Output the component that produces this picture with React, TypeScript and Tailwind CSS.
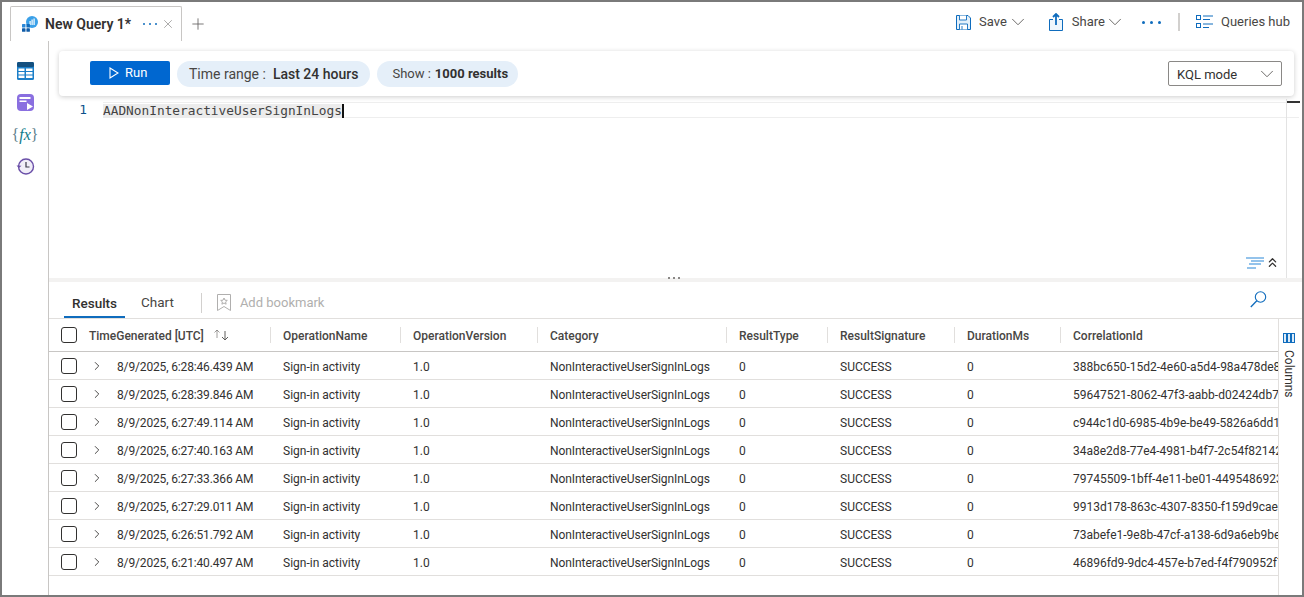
import React from "react";
import { ChevronDown, ChevronRight, ChevronsUp, Plus, X } from "lucide-react";

const rows = [
  ["8/9/2025, 6:28:46.439 AM", "388bc650-15d2-4e60-a5d4-98a478de8f10"],
  ["8/9/2025, 6:28:39.846 AM", "59647521-8062-47f3-aabb-d02424db7c11"],
  ["8/9/2025, 6:27:49.114 AM", "c944c1d0-6985-4b9e-be49-5826a6dd1a02"],
  ["8/9/2025, 6:27:40.163 AM", "34a8e2d8-77e4-4981-b4f7-2c54f8214233"],
  ["8/9/2025, 6:27:33.366 AM", "79745509-1bff-4e11-be01-449548692344"],
  ["8/9/2025, 6:27:29.011 AM", "9913d178-863c-4307-8350-f159d9cae355"],
  ["8/9/2025, 6:26:51.792 AM", "73abefe1-9e8b-47cf-a138-6d9a6eb9be66"],
  ["8/9/2025, 6:21:40.497 AM", "46896fd9-9dc4-457e-b7ed-f4f790952f77"],
];

const gridCols = "grid grid-cols-[221px_130px_137px_189px_101px_127px_106px_1fr]";

const Dots = () => (
  <span className="flex gap-[4px]">
    <span className="w-[2px] h-[2px] rounded-full bg-[#0f6cbd]" />
    <span className="w-[2px] h-[2px] rounded-full bg-[#0f6cbd]" />
    <span className="w-[2px] h-[2px] rounded-full bg-[#0f6cbd]" />
  </span>
);

const WideDots = () => (
  <span className="flex gap-[5px]">
    <span className="w-[3px] h-[3px] rounded-full bg-[#0f6cbd]" />
    <span className="w-[3px] h-[3px] rounded-full bg-[#0f6cbd]" />
    <span className="w-[3px] h-[3px] rounded-full bg-[#0f6cbd]" />
  </span>
);

const Checkbox = () => (
  <span className="block w-[16px] h-[16px] rounded-[3px] border border-[#323130] bg-white" />
);

const AppIcon = () => (
  <svg width="16" height="16" viewBox="0 0 16 16">
    <circle cx="10" cy="6" r="6" fill="#3aa0e8" />
    <rect x="7.5" y="5" width="1.2" height="4" fill="#fff" />
    <rect x="9.5" y="3.5" width="1.2" height="5.5" fill="#fff" />
    <rect x="11.5" y="2.5" width="1.2" height="6.5" fill="#fff" />
    <rect x="0" y="8" width="3.5" height="3.5" rx="0.6" fill="#2b88d8" />
    <rect x="0" y="12.3" width="3.5" height="3.5" rx="0.6" fill="#0f5ca8" />
    <rect x="4.4" y="8" width="3.5" height="3.5" rx="0.6" fill="#0f6cbd" />
    <rect x="4.4" y="12.3" width="3.5" height="3.5" rx="0.6" fill="#0f5ca8" />
  </svg>
);

const TablesIcon = () => (
  <svg width="17" height="18" viewBox="0 0 17 18">
    <rect width="17" height="18" rx="1.5" fill="#1b7fc9" />
    <rect width="17" height="5" rx="1.5" fill="#14507f" />
    <path d="M1.5 6.5h6v2.5h-6zM9 6.5h6.5v2.5H9zM1.5 10h6v2.5h-6zM9 10h6.500v2.500H9zM1.500 13.500h6V16h-6zM9 13.500h6.500V16H9z" fill="#fff" />
  </svg>
);

const QueriesIcon = () => (
  <svg width="19" height="19" viewBox="0 0 19 19">
    <rect x="1" y="1" width="17" height="17" rx="4" fill="#8a6fe0" />
    <rect x="3.500" y="4" width="11" height="2" fill="#fff" />
    <rect x="3.500" y="7.500" width="7" height="1.500" fill="#fff" />
    <path d="M11 10l6 3.500-6 3.500z" fill="#fff" />
  </svg>
);

const HistoryIcon = () => (
  <svg width="19" height="19" viewBox="0 0 19 19" fill="none">
    <circle cx="10" cy="9.500" r="7.500" fill="#f1eef8" stroke="#6a4fa8" strokeWidth="1.400" />
    <path d="M10 5v5h3.500" stroke="#3b3a4a" strokeWidth="1.200" />
    <path d="M0.500 8.500l2.400 2.600 2.600-2.400" fill="#6a4fa8" />
  </svg>
);

const SaveIcon = () => (
  <svg width="15" height="15" viewBox="0 0 15 15" fill="none" stroke="#0f6cbd">
    <path d="M.5.500h11.500l2.500 2.500v11.500H.500z" fill="#e3f0fa" />
    <path d="M3.500.500v4.500h7V.500M3.500 14.500V9h8v5.500M6 11v3.500" fill="#fff" strokeWidth="0.900" />
  </svg>
);

const ShareIcon = () => (
  <svg width="14" height="18" viewBox="0 0 14 18" fill="none" stroke="#0f6cbd">
    <path d="M4 6.500H.500v11h13v-11h-3.500" strokeWidth="1" fill="#eef6fc" />
    <path d="M7 12V1M4 4l3-3 3 3" strokeWidth="1.800" />
  </svg>
);

const HubIcon = () => (
  <svg width="17" height="14" viewBox="0 0 17 14" fill="none" stroke="#0f6cbd">
    <rect x=".5" y=".5" width="4" height="4" />
    <rect x=".5" y="8.500" width="4" height="4" />
    <path d="M7 1h10M7 4.500h7M7 9h10M7 12.500h6" />
  </svg>
);

const BookmarkIcon = () => (
  <svg width="14" height="17" viewBox="0 0 14 17" fill="none" stroke="#b0afae">
    <path d="M.500.500h13v16l-6.500-4-6.500 4z" />
    <path d="M7 4l1 2.200 2.300.2-1.700 1.500.5 2.300L7 9l-2.100 1.200.5-2.300-1.700-1.500 2.300-.2z" />
  </svg>
);

const FormatIcon = () => (
  <svg width="18" height="12" viewBox="0 0 18 12" fill="none" stroke="#2b88d8" strokeWidth="1.200">
    <path d="M0 1h18M5 4h13M3 7h12M1 11h9" />
  </svg>
);

const ColumnsIcon = () => (
  <svg width="12" height="10" viewBox="0 0 12 10" fill="#dcebf8" stroke="#0f6cbd">
    <rect x=".5" y=".5" width="3" height="9" />
    <rect x="4.500" y=".5" width="3" height="9" />
    <rect x="8.500" y=".5" width="3" height="9" />
  </svg>
);

const SearchIcon = () => (
  <svg width="17" height="17" viewBox="0 0 17 17" fill="none" stroke="#0f6cbd" strokeWidth="1.100">
    <circle cx="10.500" cy="6" r="5.200" />
    <path d="M6.800 9.800L.8 16" strokeWidth="1.300" />
  </svg>
);

const HeaderCell = ({ label }: { label: string }) => (
  <div className="flex items-center h-full">
    <span className="w-px h-[16px] bg-[#e1dfdd]" />
    <span className="pl-[12px] mt-[2px] font-medium text-[#484644]">{label}</span>
  </div>
);

export default function App() {
  return (
    <div className="w-[1304px] h-[597px] border-2 border-[#7a7a7a] bg-white flex flex-col overflow-hidden font-['Roboto',sans-serif] text-[12px] text-[#323130]">
      {/* tab strip */}
      <div className="h-[39px] shrink-0 flex items-end justify-between">
        <div className="flex items-center h-[35px] ml-[8px]">
          <div className="h-[35px] w-[172px] border border-b-0 border-[#c8c6c4] rounded-t-[2px] flex items-center pl-[11px]">
            <AppIcon />
            <span className="ml-[7px] text-[14px] font-semibold text-[#323130]">New Query 1*</span>
            <span className="ml-[12px]"><Dots /></span>
            <X size={14} strokeWidth={1.2} className="ml-[4px] text-[#8a8886]" />
          </div>
          <Plus size={18} strokeWidth={1.1} className="ml-[7px] text-[#605e5c]" />
        </div>
        <div className="flex items-center h-[36px] mb-[1px] pr-[12px] text-[13px] text-[#484644]">
          <SaveIcon />
          <span className="ml-[8px]">Save</span>
          <ChevronDown size={22} strokeWidth={1} className="text-[#605e5c]" />
          <span className="ml-[20px]"><ShareIcon /></span>
          <span className="ml-[9px]">Share</span>
          <ChevronDown size={22} strokeWidth={1} className="-ml-[1px] text-[#605e5c]" />
          <span className="ml-[16px]"><WideDots /></span>
          <span className="ml-[17px] w-[2px] h-[18px] bg-[#d2d0ce]" />
          <span className="ml-[16px]"><HubIcon /></span>
          <span className="ml-[8px]">Queries hub</span>
        </div>
      </div>

      <div className="flex-1 flex min-h-0">
        {/* left rail */}
        <div className="w-[47px] shrink-0 border-r border-[#c8c6c4] flex flex-col items-center pt-[20px] gap-[13px]">
          <span className="h-[19px] flex items-center"><TablesIcon /></span>
          <QueriesIcon />
          <span className="h-[19px] flex items-center font-['Liberation_Serif',serif] text-[16px] text-[#5f7f8c]">
            {"{"}<span className="italic text-[#0f7b8a]">fx</span>{"}"}
          </span>
          <HistoryIcon />
        </div>

        <div className="flex-1 flex flex-col min-w-0">
          {/* query box */}
          <div className="h-[237px] shrink-0 relative">
            <div className="absolute left-[10px] top-[10px] w-[1235px] h-[45px] rounded-[4px] bg-white shadow-[0_1px_5px_rgba(0,0,0,0.2)] flex items-center z-10">
              <button className="ml-[31px] w-[80px] h-[24px] rounded-[2px] bg-[#0067d0] text-white flex items-center pl-[19px] gap-[6px] text-[13px] -mt-[1px]">
                <svg width="10" height="12" viewBox="0 0 10 12" fill="none" stroke="#fff" strokeWidth="1.100"><path d="M1 1l8 5-8 5z" /></svg>
                <span className="-mt-[1px]">Run</span>
              </button>
              <div className="ml-[7px] h-[26px] px-[12px] rounded-full bg-[#e5eff9] flex items-center text-[14px] text-[#484644]">
                <span className="mt-[2px]">Time range :</span><span className="ml-[7px] mt-[2px] font-medium text-[#323130]">Last 24 hours</span>
              </div>
              <div className="ml-[7px] h-[26px] pl-[15px] pr-[10px] rounded-full bg-[#e5eff9] flex items-center text-[13px] text-[#484644]">
                <span className="mt-[1px]">Show :</span><span className="ml-[4px] mt-[1px] font-bold text-[#323130]">1000 results</span>
              </div>
              <div className="ml-auto mr-[12px] w-[114px] h-[25px] rounded-[2px] border border-[#8a8886] flex items-center justify-between pl-[8px] pr-[3px] text-[13px]">
                <span className="mt-[2px]">KQL mode</span>
                <ChevronDown size={22} strokeWidth={1} className="text-[#605e5c]" />
              </div>
            </div>
            {/* editor */}
            <div className="pt-[61px] flex items-start font-['DejaVu_Sans_Mono',monospace] text-[12.800px] leading-[15px]">
              <span className="w-[38px] text-right text-[#0b4f8a]">1</span>
              <div className="ml-[16px] flex-1 mr-[3px] border-y border-[#eeeeee] relative h-[16px]">
                <span className="bg-[#ececec] inline-block h-[14px] leading-[14px] text-[#444444] border-r-2 border-[#111111]">AADNonInteractiveUserSignInLogs</span>
              </div>
            </div>
            <div className="absolute right-[15px] top-[58px] bottom-0 w-px bg-[#e3e3e3]" />
            <div className="absolute right-[2px] top-[60px] w-[13px] h-[2px] bg-[#333333]" />
            <div className="absolute right-[22px] bottom-[8px] flex items-center gap-[1px]">
              <FormatIcon />
              <ChevronsUp size={15} strokeWidth={2} className="text-[#323130]" />
            </div>
          </div>

          {/* splitter */}
          <div className="h-[4px] shrink-0 bg-[#f3f2f1] relative">
            <span className="absolute left-[619px] -top-[1px] flex gap-[3px]">
              <span className="w-[2px] h-[2px] bg-[#8a8886]" />
              <span className="w-[2px] h-[2px] bg-[#8a8886]" />
              <span className="w-[2px] h-[2px] bg-[#8a8886]" />
            </span>
          </div>

          {/* results tabs */}
          <div className="h-[37px] shrink-0 border-b border-[#e1dfdd] flex items-center pl-[15px] pr-[35px] text-[13.500px]">
            <div className="h-full flex flex-col justify-end w-[61px]">
              <span className="text-center font-medium mb-[3px]">Results</span>
              <span className="h-[2px] bg-[#0f6cbd]" />
            </div>
            <span className="ml-[16px] mt-[5px] text-[#484644]">Chart</span>
            <span className="ml-[27px] w-px h-[20px] bg-[#d2d0ce] mt-[5px]" />
            <span className="ml-[15px] mt-[5px]"><BookmarkIcon /></span>
            <span className="ml-[9px] mt-[6px] text-[13px] text-[#b0afae]">Add bookmark</span>
            <span className="ml-auto -mt-[1px]"><SearchIcon /></span>
          </div>

          {/* table */}
          <div className="flex-1 flex min-h-0">
            <div className="w-[1229px] shrink-0 overflow-hidden">
              <div className={`${gridCols} h-[33px] border-b border-[#c8c6c4] items-center`}>
                <div className="flex items-center pl-[12px]">
                  <Checkbox />
                  <span className="ml-[12px] mt-[2px] font-medium text-[#484644]">TimeGenerated [UTC]</span>
                  <span className="ml-[9px] flex text-[#605e5c]">
                    <svg width="17" height="12" viewBox="0 0 17 12" fill="none" stroke="currentColor"><path d="M4 9V1M1.500 3.500L4 1l2.500 2.500" strokeOpacity="0.6" /><path d="M12 2v9M9 8l3 3 3-3" /></svg>
                  </span>
                </div>
                <HeaderCell label="OperationName" />
                <HeaderCell label="OperationVersion" />
                <HeaderCell label="Category" />
                <HeaderCell label="ResultType" />
                <HeaderCell label="ResultSignature" />
                <HeaderCell label="DurationMs" />
                <HeaderCell label="CorrelationId" />
              </div>
              {rows.map(([time, id]) => (
                <div key={id} className={`${gridCols} h-[28px] border-b border-[#e1dfdd] items-center`}>
                  <div className="flex items-center pl-[12px]">
                    <Checkbox />
                    <ChevronRight size={14} strokeWidth={1.5} className="ml-[13px] text-[#323130]" />
                    <span className="ml-[13px] mt-[3px] tracking-[-0.15px]">{time}</span>
                  </div>
                  <div className="pl-[13px] mt-[3px]">Sign-in activity</div>
                  <div className="pl-[13px] mt-[3px]">1.0</div>
                  <div className="pl-[13px] mt-[3px] tracking-[-0.07px]">NonInteractiveUserSignInLogs</div>
                  <div className="pl-[13px] mt-[3px]">0</div>
                  <div className="pl-[13px] mt-[3px]">SUCCESS</div>
                  <div className="pl-[13px] mt-[3px]">0</div>
                  <div className="pl-[13px] mt-[3px] whitespace-nowrap overflow-hidden">{id}</div>
                </div>
              ))}
            </div>
            <div className="flex-1 border-l border-[#e1dfdd] flex flex-col items-start pl-[4px] pt-[14px]">
              <ColumnsIcon />
              <span className="mt-[7px] text-[12px] leading-none [writing-mode:vertical-rl] text-[#323130]">Columns</span>
            </div>
          </div>
        </div>
      </div>
    </div>
  );
}
